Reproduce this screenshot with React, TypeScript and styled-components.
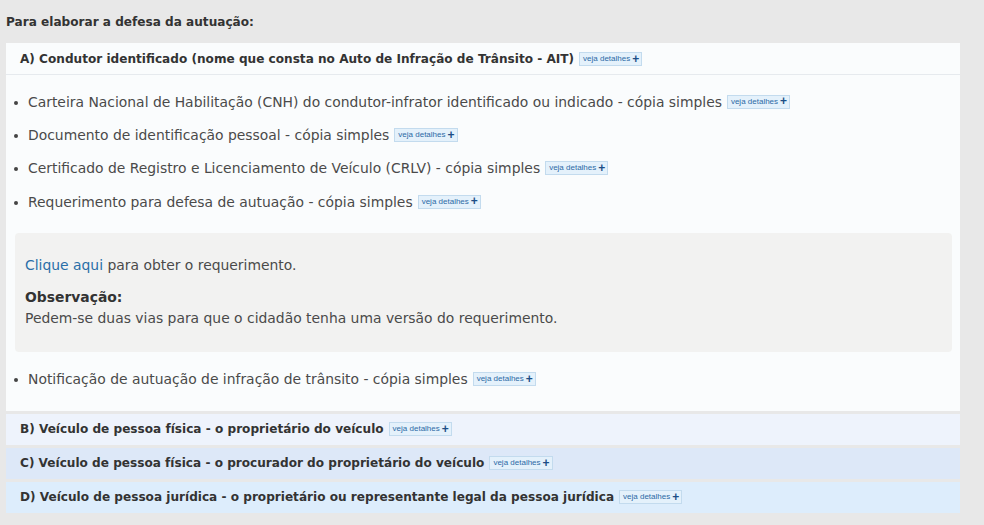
import React from 'react';
import styled, { createGlobalStyle } from 'styled-components';

const GlobalStyle = createGlobalStyle`
  html, body {
    margin: 0;
    padding: 0;
    background: #e8e8e8;
  }
  body {
    font-family: "DejaVu Sans", Verdana, sans-serif;
    color: #444;
  }
`;

const Page = styled.div`
  width: 984px;
  height: 525px;
  padding: 12px 24px 0 6px;
  box-sizing: border-box;
  overflow: hidden;
`;

const Heading = styled.h2`
  margin: 0 0 11px 0;
  font-size: 12.1px;
  font-weight: bold;
  color: #333;
  line-height: 20px;
`;

const Accordion = styled.div`
  display: flex;
  flex-direction: column;
  gap: 3px;
`;

const Section = styled.div`
  background: #fafcfd;
`;

const SectionHeader = styled.div<{ $bg: string }>`
  display: flex;
  align-items: center;
  height: 31px;
  padding: 0 14px;
  background: ${(p) => p.$bg};
  font-size: 12.1px;
  font-weight: bold;
  color: #333;
`;

const OpenHeader = styled(SectionHeader)`
  height: 30px;
  padding-top: 1px;
  border-bottom: 1px solid #e6eaee;
`;

const Body = styled.div`
  padding: 10px 8px 15px 8px;
`;

const List = styled.ul`
  margin: 0;
  padding: 0;
  list-style: none;
  display: flex;
  flex-direction: column;
`;

const Item = styled.li`
  display: flex;
  align-items: center;
  height: 33.4px;
  font-size: 13.9px;
  color: #4a4a4a;
  &::before {
    content: '';
    width: 4px;
    height: 4px;
    border-radius: 50%;
    background: #444;
    margin: 2px 10px 0 0;
    flex: none;
  }
`;

const NoteBox = styled.div`
  margin: 14px 0 11px 1px;
  background: #f2f2f1;
  border-radius: 4px;
  padding: 22px 10px 23px 10px;
  font-size: 13.9px;
  color: #4a4a4a;
`;

const Link = styled.a`
  color: #2a6ea8;
  text-decoration: none;
`;

const NoteLine = styled.p`
  margin: 0 0 11px 0;
  line-height: 21px;
`;

const NoteTitle = styled.div`
  font-weight: bold;
  color: #333;
  line-height: 21px;
`;

const NoteText = styled.div`
  line-height: 21px;
`;

const Badge = styled.span`
  display: inline-flex;
  align-items: center;
  gap: 2px;
  margin-left: 5px;
  padding: 0 2px 0 3px;
  height: 12px;
  background: #e4f1fb;
  border: 1px solid #c3dbee;
  font-size: 8px;
  font-weight: normal;
  font-family: "Liberation Sans", Arial, sans-serif;
  color: #2c6aa6;
  line-height: 1;
`;

const Plus = styled.span`
  font-size: 12px;
  font-weight: bold;
  color: #1c4e86;
  margin-top: -1px;
`;

function Details() {
  return (
    <Badge>
      veja detalhes<Plus>+</Plus>
    </Badge>
  );
}

const docs = [
  'Carteira Nacional de Habilitação (CNH) do condutor-infrator identificado ou indicado - cópia simples',
  'Documento de identificação pessoal - cópia simples',
  'Certificado de Registro e Licenciamento de Veículo (CRLV) - cópia simples',
  'Requerimento para defesa de autuação - cópia simples',
];

const closed = [
  { label: 'B) Veículo de pessoa física - o proprietário do veículo', bg: '#eef3fc' },
  { label: 'C) Veículo de pessoa física - o procurador do proprietário do veículo', bg: '#dde8f8' },
  { label: 'D) Veículo de pessoa jurídica - o proprietário ou representante legal da pessoa jurídica', bg: '#ddedfc' },
];

export default function App() {
  return (
    <Page>
      <GlobalStyle />
      <Heading>Para elaborar a defesa da autuação:</Heading>
      <Accordion>
        <Section>
          <OpenHeader $bg="#fafcfd">
            A) Condutor identificado (nome que consta no Auto de Infração de Trânsito - AIT)
            <Details />
          </OpenHeader>
          <Body>
            <List>
              {docs.map((d) => (
                <Item key={d}>
                  {d}
                  <Details />
                </Item>
              ))}
            </List>
            <NoteBox>
              <NoteLine>
                <Link href="#">Clique aqui</Link> para obter o requerimento.
              </NoteLine>
              <NoteTitle>Observação:</NoteTitle>
              <NoteText>Pedem-se duas vias para que o cidadão tenha uma versão do requerimento.</NoteText>
            </NoteBox>
            <List>
              <Item>
                Notificação de autuação de infração de trânsito - cópia simples
                <Details />
              </Item>
            </List>
          </Body>
        </Section>
        {closed.map((s) => (
          <SectionHeader key={s.label} $bg={s.bg}>
            {s.label}
            <Details />
          </SectionHeader>
        ))}
      </Accordion>
    </Page>
  );
}
